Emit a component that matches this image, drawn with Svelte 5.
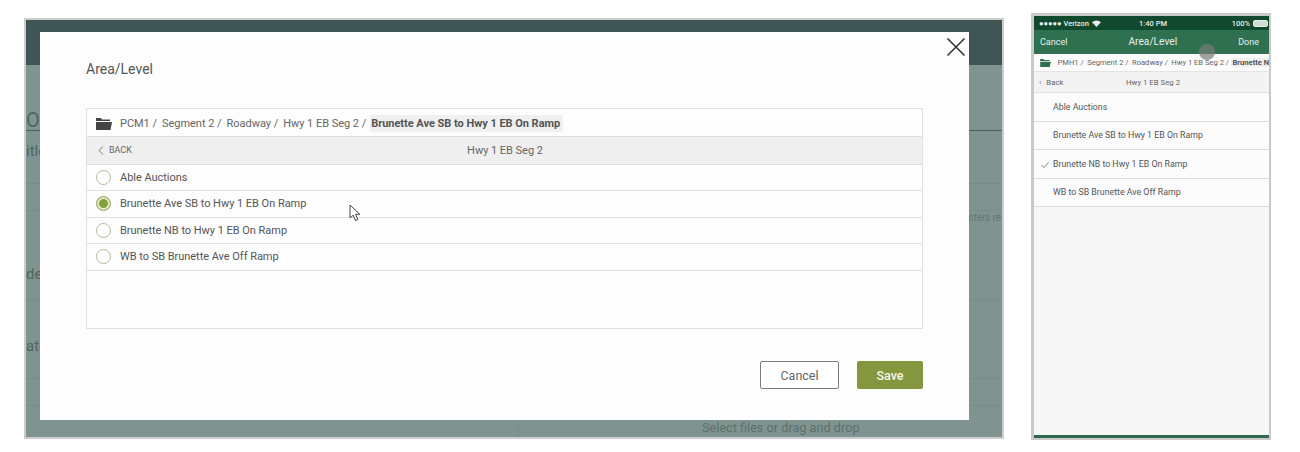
<script>
  const trail = ['PCM1', 'Segment 2', 'Roadway', 'Hwy 1 EB Seg 2'];
  const phoneTrail = ['PMH1', 'Segment 2', 'Roadway', 'Hwy 1 EB Seg 2'];
  const areas = [
    'Able Auctions',
    'Brunette Ave SB to Hwy 1 EB On Ramp',
    'Brunette NB to Hwy 1 EB On Ramp',
    'WB to SB Brunette Ave Off Ramp'
  ];
  let selected = 1;
  let phoneSelected = 2;
</script>

<div class="page">
  <div class="desktop">
    <div class="bg-top"></div>
    <div class="bg-row heading">OI</div>
    <div class="bg-row title-row">itle</div>
    <div class="bg-row short"></div>
    <div class="bg-row desc"><span>de</span><em>cters re</em></div>
    <div class="bg-row date">ate</div>
    <div class="bg-row short"></div>
    <div class="bg-row files"><i></i><span>Select files or drag and drop</span></div>

    <div class="modal">
      <h2>Area/Level</h2>
      <div class="picker">
        <div class="crumbs">
          <svg class="folder" width="16" height="12" viewBox="0 0 16 12">
            <path d="M0 0h5l1 1.500h8v1.500H0z" fill="#444" />
            <path d="M0 4h16l-1.500 8H0z" fill="#444" />
          </svg>
          {#each trail as part}
            <span class="part">{part} /</span>
          {/each}
          <b>Brunette Ave SB to Hwy 1 EB On Ramp</b>
        </div>
        <div class="back-row">
          <span class="back">
            <svg width="6" height="9" viewBox="0 0 6 9"><path d="M5 .5 1 4.500 5 8.500" fill="none" stroke="#777" /></svg>
            BACK
          </span>
          <span class="current">Hwy 1 EB Seg 2</span>
        </div>
        {#each areas as area, i}
          <div class="area">
            <span class="radio" class:on={i === selected}></span>
            {area}
          </div>
        {/each}
      </div>
      <div class="actions">
        <button class="cancel">Cancel</button>
        <button class="save">Save</button>
      </div>
      <svg class="close" width="20" height="20" viewBox="0 0 20 20">
        <path d="M1.500 1.500 18.500 18.500M18.500 1.500 1.500 18.500" stroke="#333" stroke-width="1.600" fill="none" />
      </svg>
      <svg class="pointer" width="12" height="18" viewBox="0 0 12 18">
        <path d="M1 1v13l3.200-2.800 2.300 5.300 2.300-1-2.300-5.200h4.300z" fill="#fff" stroke="#444" />
      </svg>
    </div>
  </div>

  <div class="phone">
    <div class="status">
      <span class="carrier">
        ●●●●● Verizon
        <svg width="9" height="7" viewBox="0 0 9 7"><path d="M0 2.200a6.500 6.500 0 0 1 9 0L4.500 7z" fill="#e8efe9" /></svg>
      </span>
      <span class="time">1:40 PM</span>
      <span class="battery">
        100%
        <i><u></u></i>
      </span>
    </div>
    <div class="nav">
      <span>Cancel</span>
      <strong>Area/Level</strong>
      <span>Done</span>
    </div>
    <div class="phone-crumbs">
      <svg width="11" height="8" viewBox="0 0 16 12">
        <path d="M0 0h5l1 1.500h8v1.500H0z" fill="#2f7050" />
        <path d="M0 4h16l-1.500 8H0z" fill="#2f7050" />
      </svg>
      {#each phoneTrail as part}
        <span>{part} /</span>
      {/each}
      <b>Brunette N</b>
    </div>
    <div class="phone-back">
      <span class="pb"><small>‹</small> Back</span>
      <span class="pc">Hwy 1 EB Seg 2</span>
    </div>
    {#each areas as area, i}
      <div class="phone-area">
        {#if i === phoneSelected}
          <svg class="tick" width="8" height="6" viewBox="0 0 8 6"><path d="M.5 3 3 5.500 7.500 .5" fill="none" stroke="#666" stroke-width=".8" /></svg>
        {/if}
        {area}
      </div>
    {/each}
    <div class="phone-fill"></div>
    <div class="phone-bar"></div>
    <span class="touch"></span>
  </div>
</div>

<style>
  :global(body) {
    margin: 0;
    background: #fff;
  }

  .page {
    display: flex;
    align-items: flex-start;
    gap: 27px;
    width: 1300px;
    height: 452px;
    box-sizing: border-box;
    padding: 13px 0 0 24px;
    font-family: Roboto, sans-serif;
    color: #555;
    overflow: hidden;
  }

  .desktop {
    position: relative;
    width: 980px;
    height: 421px;
    margin-top: 5px;
    box-sizing: border-box;
    border: 2px solid #ccc;
    background: #7f9490;
    overflow: hidden;
    display: flex;
    flex-direction: column;
  }

  .bg-top {
    height: 45px;
    flex-shrink: 0;
    background: #3f5654;
  }

  .bg-row {
    flex-shrink: 0;
    border-bottom: 1px solid #71858180;
    color: #4f6360;
    font-size: 14px;
    white-space: nowrap;
  }

  .heading {
    height: 65px;
    border-bottom: 1px solid #4b605d;
    font-size: 20px;
    line-height: 110px;
  }

  .title-row {
    height: 52px;
    line-height: 40px;
    font-size: 15px;
  }

  .short {
    height: 26px;
  }

  .desc {
    height: 88px;
    display: flex;
    justify-content: space-between;
  }

  .desc span {
    margin-top: 13px;
    font-size: 15px;
    line-height: 100px;
  }

  .desc em {
    height: 14px;
    font-size: 10px;
    line-height: 14px;
    padding-right: 1px;
    color: #5f7571;
  }

  .date {
    height: 78px;
    line-height: 92px;
    font-size: 15px;
  }

  .files {
    flex: 1;
    display: flex;
    border: 0;
    font-size: 12.700px;
    line-height: 44px;
    color: #5b706c;
  }

  .files i {
    width: 1px;
    margin: 14px 183px 0 492px;
    background: #71858180;
  }

  .modal {
    position: absolute;
    left: 14px;
    top: 12px;
    width: 929px;
    height: 388px;
    box-sizing: border-box;
    padding: 27px 46px 0;
    background: #fdfdfd;
  }

  h2 {
    margin: 0 0 29px;
    font-size: 14px;
    font-weight: 400;
    line-height: 20px;
    color: #555;
  }

  .picker {
    height: 221px;
    box-sizing: border-box;
    border: 1px solid #e0e0e0;
    font-size: 11px;
    letter-spacing: -0.03px;
  }

  .crumbs {
    display: flex;
    align-items: center;
    gap: 5px;
    height: 25px;
    padding: 2px 0 0 9px;
    border-bottom: 1px solid #dcdcdc;
    color: #666;
  }

  .folder {
    margin-right: 3px;
  }

  .crumbs b {
    margin-left: -1px;
    padding: 2px 3px 2px 1px;
    background: #f0f0f0;
    color: #555;
    font-weight: 700;
  }

  .back-row {
    position: relative;
    display: flex;
    align-items: center;
    justify-content: center;
    height: 26.500px;
    background: #efefef;
    border-bottom: 1px solid #dcdcdc;
  }

  .back {
    position: absolute;
    left: 11px;
    display: flex;
    align-items: center;
    gap: 5px;
    font-size: 9px;
    color: #666;
  }

  .current {
    margin-left: 1px;
    color: #666;
  }

  .area {
    display: flex;
    align-items: center;
    height: 25.500px;
    padding-left: 9px;
    border-bottom: 1px solid #e0e0e0;
    color: #555;
  }

  .radio {
    width: 15px;
    height: 15px;
    box-sizing: border-box;
    margin-right: 9px;
    border: 1.500px solid #b7b89a;
    border-radius: 50%;
    background: #fff;
  }

  .radio.on {
    background: #84a03c;
    box-shadow: inset 0 0 0 2px #e4ecd2;
    border-color: #9fb36a;
  }

  .actions {
    display: flex;
    justify-content: flex-end;
    gap: 18px;
    margin-top: 32px;
  }

  button {
    height: 28px;
    box-sizing: border-box;
    border-radius: 2px;
    font: 500 12.500px Roboto, sans-serif;
  }

  .cancel {
    width: 79px;
    background: #fff;
    border: 1px solid #7d7d7d;
    color: #666;
    font-weight: 400;
  }

  .save {
    width: 66px;
    background: #84973f;
    border: 0;
    color: #f4f6ea;
  }

  .close {
    position: absolute;
    left: 906px;
    top: 5px;
  }

  .pointer {
    position: absolute;
    left: 309px;
    top: 172px;
  }

  .phone {
    position: relative;
    width: 240px;
    height: 427px;
    box-sizing: border-box;
    border-style: solid;
    border-color: #c9c9c9;
    border-width: 3px 2px 2px 3px;
    background: #f7f7f7;
    display: flex;
    flex-direction: column;
    overflow: hidden;
    font-size: 8.800px;
  }

  .status {
    display: flex;
    align-items: center;
    justify-content: space-between;
    height: 14px;
    flex-shrink: 0;
    padding: 0 1px 0 5px;
    background: #10492e;
    color: #e8efe9;
    font-size: 7.500px;
    font-weight: 500;
  }

  .carrier {
    display: flex;
    align-items: center;
    gap: 3px;
    width: 100px;
  }

  .time {
    flex: 1;
  }

  .battery {
    display: flex;
    align-items: center;
    gap: 3px;
  }

  .battery i {
    width: 15px;
    height: 7px;
    box-sizing: border-box;
    border: 1px solid #e8efe9;
    border-radius: 2px;
    display: block;
  }

  .battery u {
    display: block;
    height: 100%;
    background: #cfdcd3;
  }

  .nav {
    display: flex;
    align-items: center;
    justify-content: space-between;
    height: 24px;
    flex-shrink: 0;
    padding: 0 10px 0 6px;
    background: #2f7050;
    color: #e6efe9;
    font-size: 9px;
  }

  .nav strong {
    font-size: 10.200px;
    font-weight: 400;
    transform: translateY(-1px);
  }

  .phone-crumbs {
    display: flex;
    align-items: center;
    gap: 3.500px;
    height: 18px;
    flex-shrink: 0;
    padding-left: 6px;
    white-space: nowrap;
    font-size: 7.600px;
    color: #666;
    border-bottom: 1px solid #e4e4e4;
    background: #fbfbfb;
    box-sizing: border-box;
  }

  .phone-crumbs svg {
    margin-right: 3px;
    flex-shrink: 0;
  }

  .phone-crumbs span {
    flex-shrink: 0;
  }

  .phone-crumbs b {
    margin-left: -1px;
    padding-left: 1px;
    background: #efefef;
    color: #555;
    flex-shrink: 0;
  }

  .phone-back {
    display: flex;
    align-items: center;
    height: 21px;
    flex-shrink: 0;
    padding-left: 5px;
    background: #f3f3f3;
    border-bottom: 1px solid #e0e0e0;
    box-sizing: border-box;
    color: #666;
    font-size: 7.800px;
  }

  .pb {
    width: 87px;
  }

  .pb small {
    margin-right: 3px;
    font-size: 8px;
  }

  .phone-area {
    position: relative;
    display: flex;
    align-items: center;
    height: 28.500px;
    flex-shrink: 0;
    box-sizing: border-box;
    padding-left: 19px;
    background: #fcfcfc;
    border-bottom: 1px solid #dcdcdc;
    color: #555;
  }

  .tick {
    position: absolute;
    left: 7px;
    top: 12px;
  }

  .phone-fill {
    flex: 1;
  }

  .phone-bar {
    height: 3px;
    flex-shrink: 0;
    background: #2f6a50;
  }

  .touch {
    position: absolute;
    left: 165px;
    top: 28px;
    width: 16px;
    height: 16px;
    border-radius: 50%;
    background: rgba(120, 125, 120, 0.7);
  }
</style>
